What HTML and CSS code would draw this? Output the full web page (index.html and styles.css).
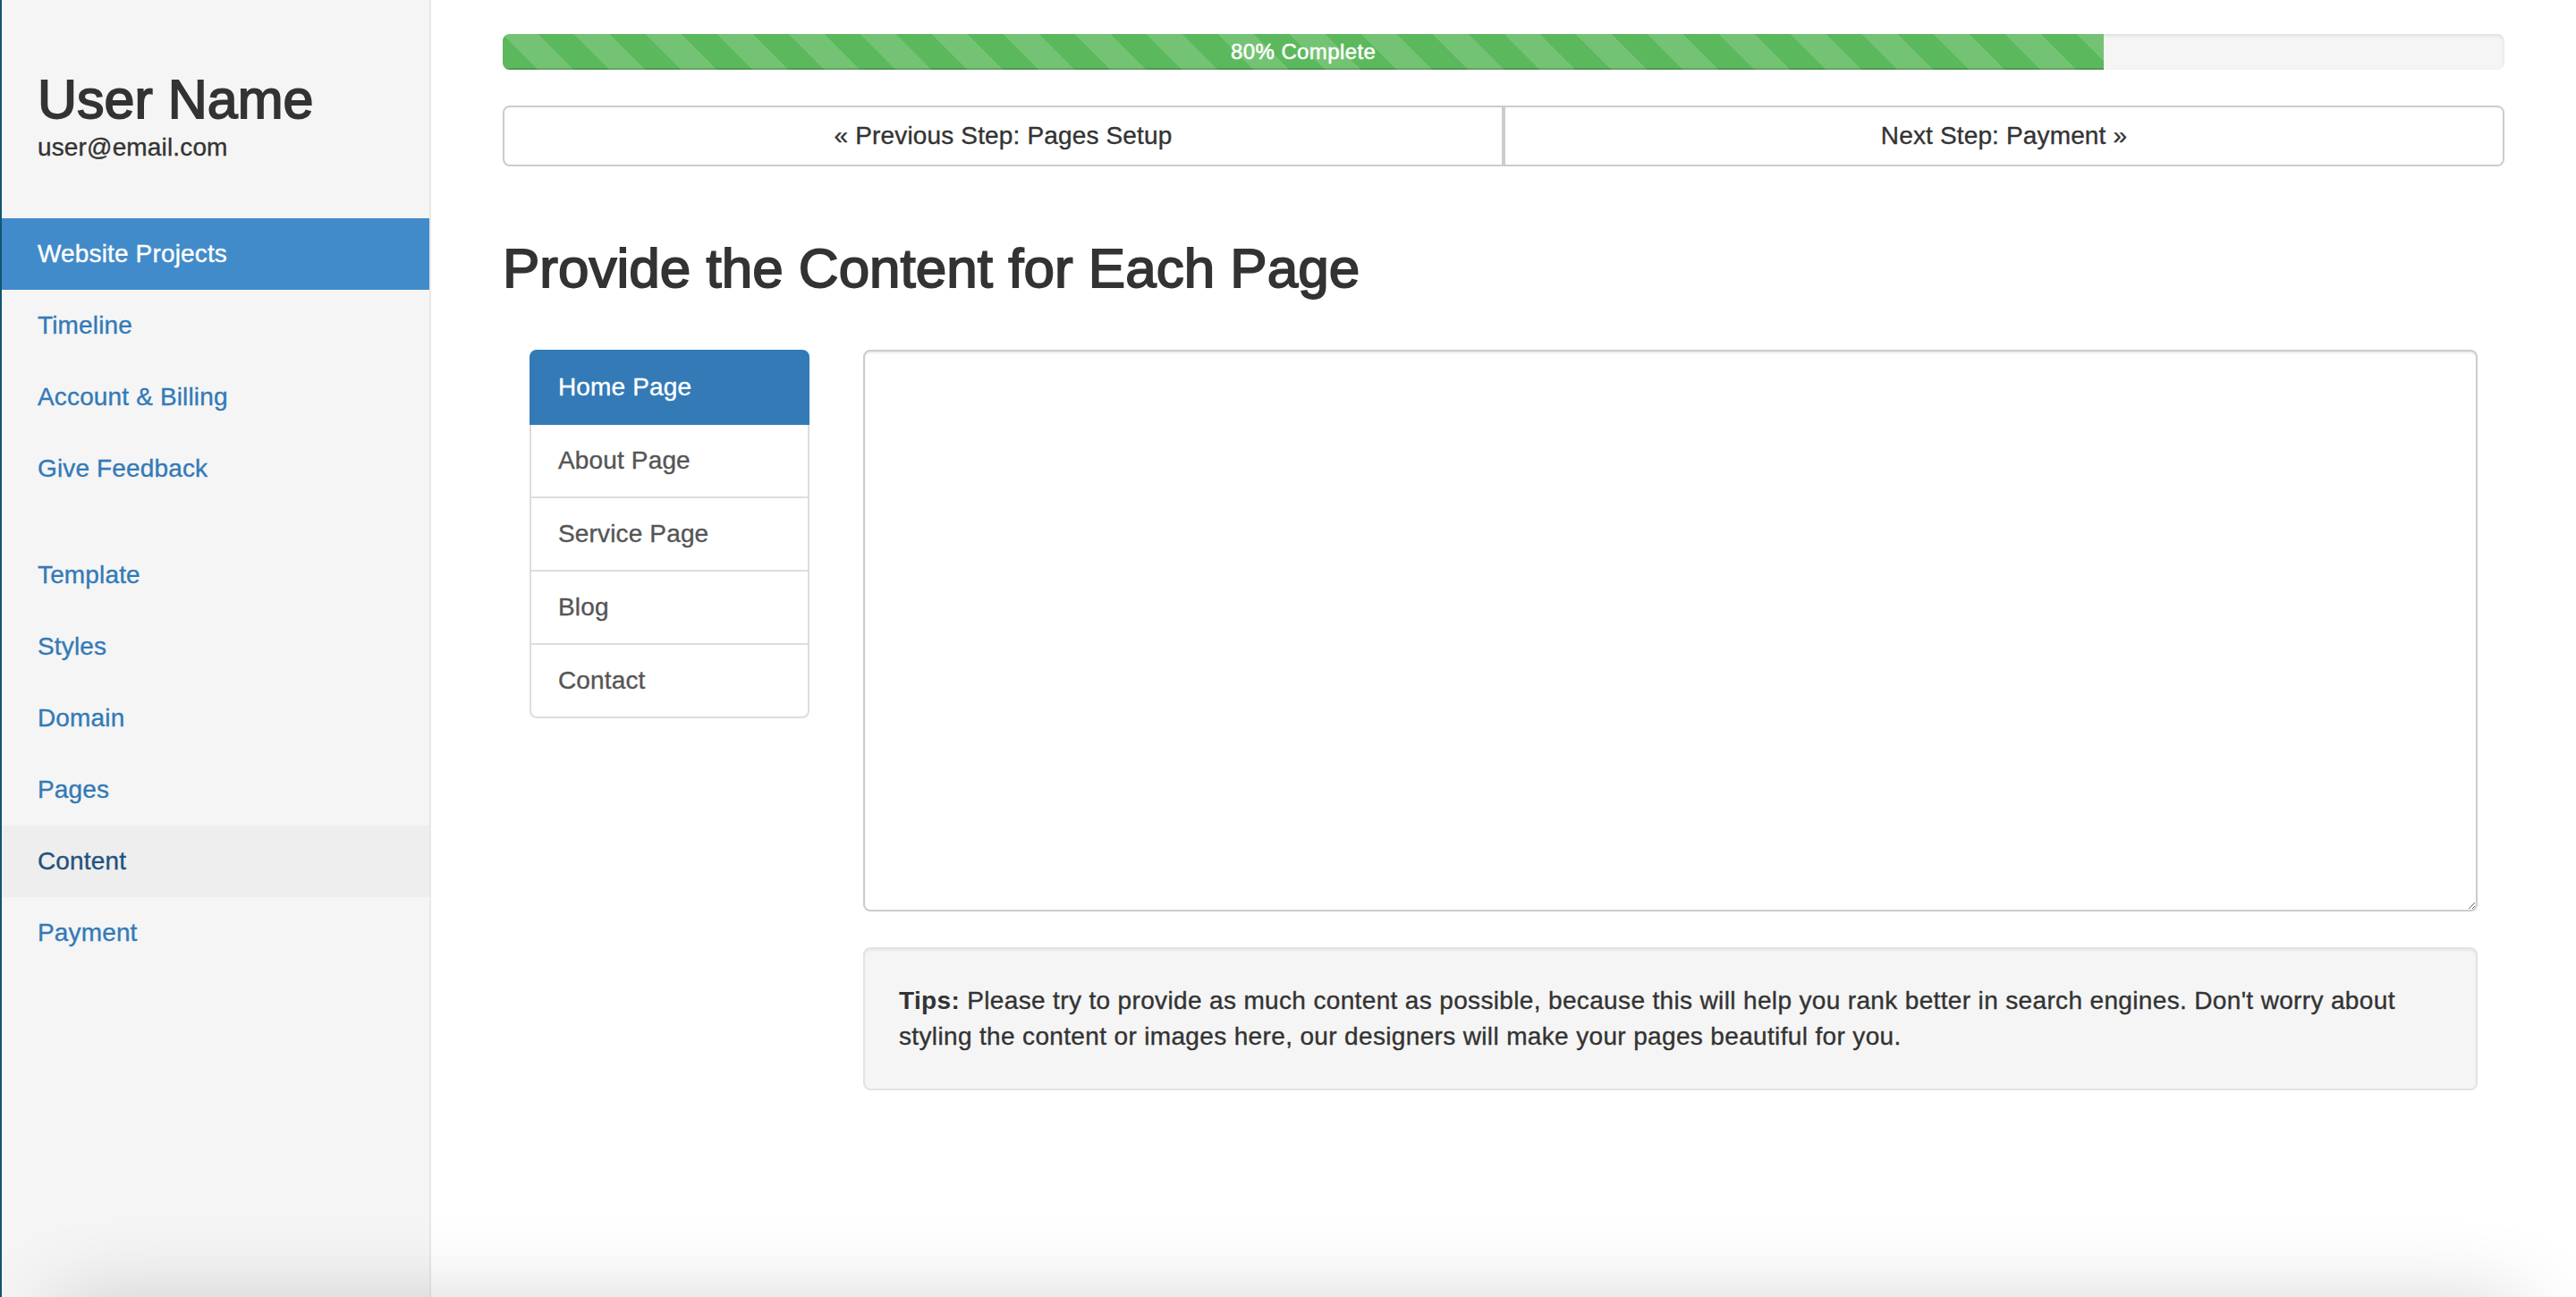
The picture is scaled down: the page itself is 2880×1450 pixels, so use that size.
FILE: index.html
```html
<!DOCTYPE html>
<html lang="en">
<head>
<meta charset="utf-8">
<title>Provide the Content for Each Page</title>
<link rel="stylesheet" href="styles.css">
</head>
<body>
<div class="app">
  <aside class="sidebar">
    <div class="profile">
      <h2 class="profile-name">User Name</h2>
      <div class="profile-email">user@email.com</div>
    </div>
    <ul class="side-nav">
      <li><a class="side-link is-active" href="#">Website Projects</a></li>
      <li><a class="side-link" href="#">Timeline</a></li>
      <li><a class="side-link" href="#">Account &amp; Billing</a></li>
      <li><a class="side-link" href="#">Give Feedback</a></li>
    </ul>
    <ul class="side-nav side-nav-steps">
      <li><a class="side-link" href="#">Template</a></li>
      <li><a class="side-link" href="#">Styles</a></li>
      <li><a class="side-link" href="#">Domain</a></li>
      <li><a class="side-link" href="#">Pages</a></li>
      <li><a class="side-link is-current" href="#">Content</a></li>
      <li><a class="side-link" href="#">Payment</a></li>
    </ul>
  </aside>

  <main class="main">
    <div class="progress">
      <div class="progress-bar" style="width: 80%">80% Complete</div>
    </div>

    <div class="pager">
      <a class="pager-btn pager-prev" href="#">&laquo; Previous Step: Pages Setup</a>
      <a class="pager-btn pager-next" href="#">Next Step: Payment &raquo;</a>
    </div>

    <h1 class="page-title">Provide the Content for Each Page</h1>

    <div class="content-row">
      <div class="col-pages">
        <div class="list-group">
          <a class="list-item is-active" href="#">Home Page</a>
          <a class="list-item" href="#">About Page</a>
          <a class="list-item" href="#">Service Page</a>
          <a class="list-item" href="#">Blog</a>
          <a class="list-item" href="#">Contact</a>
        </div>
      </div>
      <div class="col-editor">
        <textarea class="editor" rows="15"></textarea>
        <div class="well"><strong class="well-label">Tips:</strong> Please try to provide as much content as possible, because this will help you rank better in search engines. Don't worry about styling the content or images here, our designers will make your pages beautiful for you.</div>
      </div>
    </div>
  </main>
</div>
<div class="window-shadow"></div>
</body>
</html>
```

FILE: styles.css
```css
* { box-sizing: border-box; }

html, body {
  margin: 0;
  padding: 0;
  height: 100%;
  background: #fff;
}

body {
  font-family: "Liberation Sans", Arial, Helvetica, sans-serif;
  font-size: 28px;
  line-height: 40px;
  color: #333;
  letter-spacing: 0.15px;
  -webkit-text-stroke: 0.35px currentColor;
  overflow: hidden;
}

a { text-decoration: none; }

.app {
  display: flex;
  height: 1450px;
}

/* ---------- Sidebar ---------- */
.sidebar {
  width: 482px;
  flex: 0 0 482px;
  background: #f5f5f5;
  border-left: 2px solid #0f5673;
  border-right: 2px solid #e8e8e8;
}

.profile {
  padding: 78px 40px 0 40px;
}

.profile-name {
  margin: 0 0 1px 0;
  font-size: 61px;
  line-height: 66px;
  font-weight: 400;
  letter-spacing: 0;
  color: #333;
  -webkit-text-stroke: 1.8px #333;
}

.profile-email {
  font-size: 28px;
  line-height: 40px;
  color: #333;
}

.side-nav {
  list-style: none;
  margin: 59px 0 0 0;
  padding: 0;
}

.side-nav-steps {
  margin-top: 39px;
}

.side-link {
  display: block;
  padding: 20px 40px;
  line-height: 40px;
  font-size: 28px;
  color: #337ab7;
}

.side-link.is-active {
  background: #428bca;
  color: #fff;
}

.side-link.is-current {
  background: #eee;
  color: #23527c;
}

/* ---------- Main ---------- */
.main {
  flex: 1 1 auto;
  padding: 38px 80px 0 80px;
  min-width: 0;
}

.progress {
  height: 40px;
  background: #f5f5f5;
  border-radius: 8px;
  box-shadow: inset 0 2px 4px rgba(0, 0, 0, 0.1);
  overflow: hidden;
  margin-bottom: 40px;
}

.progress-bar {
  height: 40px;
  background-color: #5cb85c;
  background-image: linear-gradient(45deg,
    rgba(255, 255, 255, 0.15) 25%, transparent 25%,
    transparent 50%, rgba(255, 255, 255, 0.15) 50%,
    rgba(255, 255, 255, 0.15) 75%, transparent 75%, transparent);
  background-size: 80px 80px;
  box-shadow: inset 0 -2px 0 rgba(0, 0, 0, 0.15);
  color: #fff;
  font-size: 24px;
  line-height: 40px;
  text-align: center;
  letter-spacing: 0.4px;
  -webkit-text-stroke: 0.5px #fff;
}

.pager {
  display: flex;
}

.pager-btn {
  flex: 1 1 0;
  display: block;
  padding: 12px 24px;
  font-size: 28px;
  line-height: 40px;
  text-align: center;
  color: #333;
  background: #fff;
  border: 2px solid #ccc;
}

.pager-prev { border-radius: 8px 0 0 8px; }
.pager-next { border-radius: 0 8px 8px 0; }

.page-title {
  margin: 81px 0 58px 0;
  font-size: 62px;
  line-height: 66px;
  font-weight: 400;
  letter-spacing: 0;
  color: #333;
  -webkit-text-stroke: 1.8px #333;
}

.content-row {
  display: flex;
}

.col-pages {
  flex: 0 0 16.6667%;
  padding: 0 30px;
}

.col-editor {
  flex: 0 0 83.3333%;
  padding: 0 30px;
}

.list-group {
  display: flex;
  flex-direction: column;
}

.list-item {
  display: block;
  padding: 20px 30px;
  margin-bottom: -2px;
  font-size: 28px;
  line-height: 40px;
  color: #555;
  background: #fff;
  border: 2px solid #ddd;
}

.list-item:first-child { border-radius: 8px 8px 0 0; }
.list-item:last-child { border-radius: 0 0 8px 8px; margin-bottom: 0; }

.list-item.is-active {
  position: relative;
  background: #337ab7;
  border-color: #337ab7;
  color: #fff;
}

.editor {
  display: block;
  width: 100%;
  height: 628px;
  margin: 0 0 40px 0;
  padding: 12px 24px;
  font-family: inherit;
  font-size: 28px;
  line-height: 40px;
  color: #555;
  background: #fff;
  border: 2px solid #ccc;
  border-radius: 8px;
  box-shadow: inset 0 2px 2px rgba(0, 0, 0, 0.075);
  resize: vertical;
  outline: none;
}

.well {
  padding: 38px;
  background: #f5f5f5;
  border: 2px solid #e3e3e3;
  border-radius: 8px;
  box-shadow: inset 0 2px 2px rgba(0, 0, 0, 0.05);
  font-size: 28px;
  line-height: 40px;
  letter-spacing: 0.35px;
  color: #333;
}

.well-label {
  font-weight: 700;
  -webkit-text-stroke: 0;
}

/* soft shadow of a window below, bleeding in at the bottom edge */
.window-shadow {
  position: fixed;
  left: 60px;
  right: 60px;
  top: 1462px;
  height: 120px;
  box-shadow: 0 0 100px rgba(0, 0, 0, 0.2);
  pointer-events: none;
}
```
